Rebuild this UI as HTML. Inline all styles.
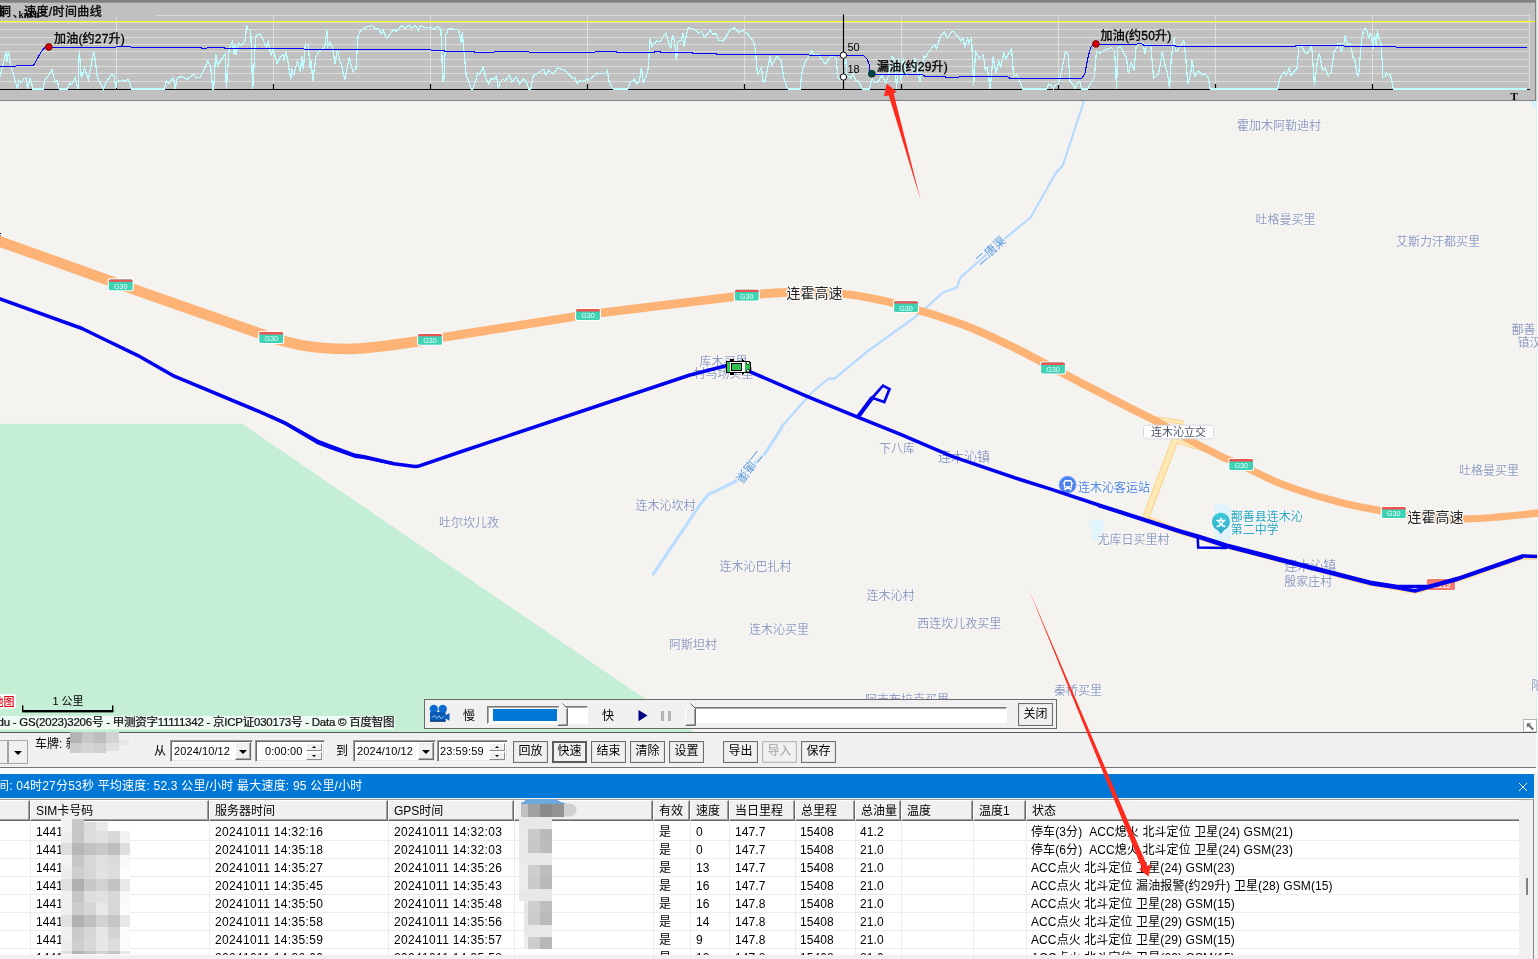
<!DOCTYPE html>
<html lang="zh"><head><meta charset="utf-8"><title>轨迹回放</title>
<style>
html,body{margin:0;padding:0}
body{width:1538px;height:959px;position:relative;overflow:hidden;background:#f0f0f0;font-family:"Liberation Sans","Noto Sans CJK SC",sans-serif;font-size:12px;color:#000}
svg{position:absolute;left:0;top:0;display:block}
#mapsvg,#pb,#tb,#bluebar,#tblwrap,.lab,.btn,.dp{will-change:transform}
#arrows{pointer-events:none}
.abs{position:absolute}
svg text{font-family:"Liberation Sans","Noto Sans CJK SC",sans-serif}
#mosaic{pointer-events:none}
/* playback bar */
#pb{position:absolute;left:424px;top:699px;width:633px;height:30px;background:#f0f0f0;border:1px solid #6a6a6a;box-sizing:border-box}
.sunk{position:absolute;box-sizing:border-box;background:#fff;border:1px solid;border-color:#7a7a7a #fff #fff #7a7a7a;box-shadow:inset 1px 1px 0 #a8a8a8}
.lab{position:absolute;white-space:nowrap;line-height:14px;height:14px}
.btn{position:absolute;box-sizing:border-box;height:22px;top:741px;background:#f0f0f0;border:1px solid #6e6e6e;text-align:center;line-height:19px;font-size:12px;white-space:nowrap;box-shadow:inset 0 0 0 1px #e4e4e4}
.btn.dis{color:#a0a0a0;border-color:#b8b8b8}
.btn.focus{border:2px solid #5c5c5c;line-height:17px;box-shadow:none}
.thumb{position:absolute}
/* toolbar */
#tb{position:absolute;left:0;top:733px;width:1536px;height:34px;background:#f0f0f0;box-shadow:2px 0 0 #fafafa}
#tbline{position:absolute;left:0;top:767px;width:1536px;height:1px;background:#747474}
#gap{position:absolute;left:0;top:768px;width:1538px;height:6px;background:#fafafa}
#bluebar{position:absolute;left:0;top:774px;width:1534px;height:24px;background:#0078d7;color:#fff;font-size:12px;line-height:24px;white-space:nowrap}
.dp{position:absolute;top:740px;height:22px;box-sizing:border-box;background:#fff;border:1px solid;border-color:#9a9a9a #f8f8f8 #f8f8f8 #9a9a9a;box-shadow:inset 1px 1px 0 #6a6a6a, inset -1px -1px 0 #e3e3e3;font-size:11px;line-height:19px;white-space:nowrap}
.dp span.t{position:absolute;left:3px;top:1px;letter-spacing:0.1px}
.ddb{position:absolute;right:1px;top:1px;width:16px;height:18px;box-sizing:border-box;background:#f0f0f0;border:1px solid;border-color:#fff #6e6e6e #6e6e6e #fff;box-shadow:inset -1px -1px 0 #a8a8a8}
.ddb:after{content:"";position:absolute;left:3px;top:7px;border:4px solid transparent;border-top:4px solid #000;border-bottom:0}
.spin{position:absolute;right:2px;top:2px;width:16px;height:17px}
.spin i{position:absolute;left:0;width:16px;height:8px;box-sizing:border-box;background:#f0f0f0;border:1px solid;border-color:#fff #8a8a8a #8a8a8a #fff}
.spin i:after{content:"";position:absolute;left:5px;top:2px;border:2px solid transparent}
.spin i.u{top:0}.spin i.u:after{border-bottom:2px solid #000;border-top:0}
.spin i.d{top:9px}.spin i.d:after{border-top:2px solid #000;border-bottom:0;top:2px}
/* table */
#tblwrap{position:absolute;left:0;top:799px;width:1534px;height:160px;background:#f0f0f0;border-top:1px solid #a0a0a0;border-right:1px solid #8a8a8a;box-sizing:border-box}
#tblbody{position:absolute;left:0;top:0;width:1519px;height:155px;background:#fff;border-radius:0 0 4px 0;overflow:hidden}
.hc{position:absolute;top:0;height:21px;box-sizing:border-box;background:#f0f0f0;border-left:1px solid #fff;border-top:1px solid #fff;border-right:1px solid #696969;border-bottom:1px solid #696969;box-shadow:inset -1px -1px 0 #a0a0a0;font-size:12px;line-height:20px;padding-left:5px;white-space:nowrap;overflow:hidden}
.row{position:absolute;left:0;width:1519px;height:18px;border-bottom:1px solid #ececec;box-sizing:border-box;font-size:12px;line-height:18px;white-space:nowrap}
.row span{position:absolute;top:0;letter-spacing:0.1px}
.row span.d{letter-spacing:0.33px}
.vl{position:absolute;top:21px;width:1px;height:140px;background:#ececec}
.mos{position:absolute}

.hc.last{border-right:0;box-shadow:inset 0 -1px 0 #a0a0a0}
.cl{position:absolute;white-space:nowrap;font-family:"Liberation Sans","Noto Sans CJK SC",sans-serif;font-size:12px;line-height:13px;color:#000}
.cl{-webkit-text-stroke:0.35px #000}
.cl.ser{font-family:"Liberation Serif","Noto Serif CJK SC",serif;-webkit-text-stroke:0}
.cl.num{-webkit-text-stroke:0}

</style></head><body>
<svg id="mapsvg" width="1538" height="959" viewBox="0 0 1538 959">
<g id="map">
<rect x="0" y="101" width="1536" height="631" fill="#f5f3f0"/>
<rect x="1536" y="101" width="2" height="631" fill="#fafafa"/><rect x="1536" y="101" width="0.7" height="631" fill="#e4e4e4"/>
<polygon points="0,423.7 242,423.7 702.3,738 0,738" fill="#c4eed5"/>
<polygon points="1529,101 1536,101 1536,109" fill="#d8f3fb"/>
<polygon points="1214.2,504.2 1228,504.6 1228,506.2 1231,506.6 1231,541 1215,541 1215,531 1212.8,531 1212.8,515 1214.2,515" fill="#e2f4fb"/>
<path d="M1089 519.5H1103.5V540.5H1092V527H1089Z" fill="#e2f4fb"/>
<!-- canal -->
<polyline points="1084,101 1063,165 1055.5,173.5 1030.5,217.5 1003,240 960.5,277.5 957,287.5 943,292.5 918,315 868.7,350.4 834.5,378.7 828.4,378.5 810.2,394 782.9,425.2 777,435" fill="none" stroke="#b5daff" stroke-width="2.2" stroke-linejoin="round"/>
<polyline points="782.9,425.2 777,435 765,453.4 736.4,481 708.7,494.3 700.8,503.5 652.6,575.2" fill="none" stroke="#b9dcff" stroke-width="3.1" stroke-linejoin="round"/>
<!-- G312 under-road -->
<polyline points="1146,517.5 1180,531.8 1200,537.6 1226,546 1278.8,559.8 1370,583.4 1397.3,588.2 1414.9,591.6 1428.5,587.6 1458,579.4 1522.5,557 1537,557.2" fill="none" stroke="#ffdca6" stroke-width="5.4" stroke-linejoin="round"/>
<!-- yellow ramp roads -->
<g fill="none" stroke="#f9d58e" stroke-linecap="round" stroke-linejoin="round">
<path d="M1174.6 441 L1146 517" stroke-width="7.2"/>
<path d="M1157 419 Q1172 420.5 1181.6 422.5 Q1181 432 1175 440.5 Q1187 444.5 1205 450" stroke-width="4.4"/>
</g>
<g fill="none" stroke="#ffe9b6" stroke-linecap="round" stroke-linejoin="round">
<path d="M1174.6 441 L1146 517" stroke-width="5"/>
<path d="M1157 419 Q1172 420.5 1181.6 422.5 Q1181 432 1175 440.5 Q1187 444.5 1205 450" stroke-width="2.4"/>
</g>
<text x="-54" y="242.6" font-size="14px" fill="#1e1e1e" stroke="#fbfaf8" stroke-width="2.4" paint-order="stroke" stroke-linejoin="round">连霍高速</text>
<!-- highway -->
<g fill="none" stroke="#fdb376" stroke-linejoin="round" stroke-linecap="round">
<path d="M-5 239.8 L120.7 284.7 L271 337.4 C300 346.5 320 349 346 349 C372 349 400 344 430 339.4" stroke-width="10.6"/>
<path d="M425 340.2 L430 339.4 L587.7 314.5 L746.8 295.2 C775 292.5 800 291.5 820 292" stroke-width="8.8"/>
<path d="M815 291.9 L820 292 C850 293 880 299 906 306.6 C930 313 945 318 962.5 324.5 C985 333 1020 350 1053 368 L1080 382.3 L1130 408 L1158 422" stroke-width="8"/>
<path d="M1154 420 L1158 422 L1195.7 443.4 L1223.8 457.7 L1241.2 465 C1260 474.5 1270 479.5 1278 482.6 C1296 490 1315 495.5 1328.7 499.3 C1350 505.5 1368 509 1393.8 512.6 C1420 516.6 1440 518.8 1464 518.8 C1480 518.8 1490 518 1497.8 517 C1515 515.5 1525 514.5 1540 512.8" stroke-width="7.3"/>
</g>
<!-- G30 signs -->
<defs>
<g id="g30">
<rect x="-13" y="-6.5" width="26" height="13" rx="1.8" fill="#fff"/>
<rect x="-11.9" y="-5.3" width="23.8" height="10.8" rx="1.5" fill="#3fd1b4"/>
<path d="M-11.9 -3.8 a1.5 1.5 0 0 1 1.5 -1.5 h20.8 a1.5 1.5 0 0 1 1.5 1.5 v0.8 h-23.8z" fill="#ee5350"/>
<text x="0" y="4" font-size="8px" fill="#f2fffb" text-anchor="middle" textLength="13.6" lengthAdjust="spacingAndGlyphs">G30</text>
</g>
</defs>
<use href="#g30" x="120.7" y="284.7"/>
<use href="#g30" x="271.2" y="337.4"/>
<use href="#g30" x="430" y="339.2"/>
<use href="#g30" x="588" y="314.4"/>
<use href="#g30" x="746.8" y="295.1"/>
<use href="#g30" x="906" y="306.6"/>
<use href="#g30" x="1053" y="367.9"/>
<use href="#g30" x="1241.2" y="464.4"/>
<use href="#g30" x="1393.8" y="512.4"/>
<!-- G312 sign -->
<g>
<rect x="1426" y="578" width="30" height="13" rx="1.8" fill="#fff"/><rect x="1427" y="579" width="28" height="11" rx="1.2" fill="#fa7668"/>
<text x="1441" y="587.6" font-size="8px" font-weight="bold" fill="#fff" text-anchor="middle">G312</text>
</g>
<!-- place labels -->
<g font-size="12px" fill="#8f9dc2" stroke="#f8f7f5" stroke-width="2" paint-order="stroke" stroke-linejoin="round">
<text x="1237" y="130.4">霍加木阿勒迪村</text>
<text x="1255.5" y="223.8">吐格曼买里</text>
<text x="1396" y="246.0">艾斯力汗都买里</text>
<text x="1511.5" y="333.6">鄯善</text>
<text x="1517.5" y="346.8">镇汉</text>
<text x="1459" y="475.4">吐格曼买里</text>
<text x="699.5" y="365.6">库木买里</text>
<text x="693.5" y="378.4">村马场买里</text>
<text x="439" y="527.2">吐尔坎儿孜</text>
<text x="635.5" y="510.3">连木沁坎村</text>
<text x="719.5" y="570.5">连木沁巴扎村</text>
<text x="866.4" y="600.3">连木沁村</text>
<text x="917.3" y="627.6">西连坎儿孜买里</text>
<text x="749" y="634.2">连木沁买里</text>
<text x="669" y="649.3">阿斯坦村</text>
<text x="865" y="704.2">阿吉布拉克买里</text>
<text x="1054" y="695.0">秦桥买里</text>
<text x="879" y="453.0">下八库</text>
<text x="938" y="461.4" font-size="13px">连木沁镇</text>
<text x="1284.3" y="569.6" font-size="13px">连木沁镇</text>
<text x="1284.3" y="585.8">殷家庄村</text>
<text x="1097.5" y="543.8">尤库日买里村</text>
<text x="1531" y="690.3">阳</text>
</g>
<g font-size="12px" fill="#5a9be0" stroke="#f8f7f5" stroke-width="2" paint-order="stroke" stroke-linejoin="round">
<text transform="translate(990.5 250.5) rotate(-42)" text-anchor="middle" y="4.3">二唐渠</text>
<text transform="translate(749.5 467) rotate(127)" text-anchor="middle" y="4.3">二唐渠</text>
</g>
<g font-size="14px" fill="#1e1e1e" stroke="#fbfaf8" stroke-width="2.4" paint-order="stroke" stroke-linejoin="round">
<text x="786.5" y="298">连霍高速</text>
<text x="1407.5" y="522.4">连霍高速</text>
</g>
<!-- interchange label -->
<rect x="1143.5" y="425.2" width="70" height="13.6" rx="2.5" fill="#fff" stroke="#c9d2e6" stroke-width="0.8"/>
<text x="1178.4" y="435.9" font-size="11px" fill="#4a5068" text-anchor="middle">连木沁立交</text>
<!-- POIs -->
<g>
<circle cx="1067.6" cy="484.7" r="8.5" fill="#4f82ee"/>
<circle cx="1067.6" cy="484.7" r="8.5" fill="none" stroke="#7aa4f5" stroke-width="0.8"/>
<rect x="1063.8" y="480.1" width="8.3" height="8.8" rx="1.8" fill="#fff"/>
<rect x="1065" y="481.6" width="5.9" height="4.6" rx="0.7" fill="#4f82ee"/>
<circle cx="1065.6" cy="487.5" r="0.65" fill="#4f82ee"/><circle cx="1070.3" cy="487.5" r="0.65" fill="#4f82ee"/>
<rect x="1064.3" y="488.6" width="1.8" height="1.5" fill="#fff"/><rect x="1069.8" y="488.6" width="1.8" height="1.5" fill="#fff"/>
<rect x="1062.8" y="482.6" width="1" height="1.6" fill="#fff"/><rect x="1072.1" y="482.6" width="1" height="1.6" fill="#fff"/>
<text x="1078" y="491.5" font-size="12px" fill="#4c86e6" stroke="#f8f7f5" stroke-width="2" paint-order="stroke" stroke-linejoin="round">连木沁客运站</text>
</g>
<g>
<defs><linearGradient id="sg" x1="0" y1="0" x2="0" y2="1"><stop offset="0" stop-color="#3ecbd6"/><stop offset="1" stop-color="#2fa9cb"/></linearGradient></defs>
<path d="M1220.9 533.9 L1217.28 529.83 A8.9 8.9 0 1 1 1224.52 529.83 Z" fill="url(#sg)"/>
<text x="1220.9" y="525.6" font-size="9.5px" font-weight="bold" fill="#fff" text-anchor="middle" stroke="#fff" stroke-width="0.3">文</text>
<g font-size="12px" fill="#2ba7c4" stroke="#f8f7f5" stroke-width="2" paint-order="stroke" stroke-linejoin="round">
<text x="1230.8" y="521.4">鄯善县连木沁</text>
<text x="1230.8" y="534">第二中学</text>
</g>
</g>
<!-- track -->
<g fill="none" stroke="#0000ee" stroke-linejoin="round">
<polyline points="-3,297.8 82.1,328.5 100,337.2 137.5,355.3 174.2,376.2 260,411.9 284.7,422.8 317.2,441 330.2,446.2 355,455.3 364,456.8 394,463.7 414.7,466.6 418,466.3 460,452 690,375 726,365.8 738,364.5 749.1,371.3 807.6,396.6 857.7,417.2 900,434.1 952,456.3 960,459.2 1021.6,480 1050,488.9 1098.6,505 1120,511.7 1180,530.8 1200,536.7 1226,545 1278.8,558.6 1370,582.3 1397.3,586.6 1428.5,586.4 1458,578.3 1522.5,556 1537,556.4" stroke-width="3.5"/>
<polyline points="270,416.2 284.7,423.2 317.2,442.5 330.2,447.6 355,456.4 364,457.6 394,463.9" stroke-width="3"/>
<polyline points="1098.6,505.5 1120,512.4 1180,531.8 1200,537.7 1226,546.3 1278.8,560 1370,583.4 1397.3,587.8 1414.9,591 1428.5,587.2 1458,579.2 1522.5,556.8" stroke-width="3.5"/>
<path d="M857.7 417.2 L872.6 397.3" stroke-width="4.2"/>
<path d="M872.6 397.3 L883 385.6 L889.5 389.1 L884.3 402.1 L873.5 398.2" stroke-width="2.7" stroke-linejoin="miter"/>
<path d="M1197.7 537 L1198.2 547.4 L1227 547.9" stroke-width="2.5" stroke-linejoin="miter"/>
</g>
<!-- vehicle -->
<g shape-rendering="crispEdges">
<rect x="729.8" y="358.8" width="4.6" height="3" fill="#000"/><rect x="729.8" y="371.8" width="4.6" height="3" fill="#000"/>
<path d="M741.8 358.2 L743.8 360 L743.8 362 L741.8 362Z M741.8 375.2 L743.8 373.4 L743.8 371.8 L741.8 371.8Z" fill="#000"/>
<rect x="726.3" y="361" width="23.8" height="11.6" rx="1.6" fill="#30c050" stroke="#000" stroke-width="1"/>
<rect x="729.8" y="361.8" width="15" height="10" fill="#fff"/>
<rect x="731" y="363.2" width="10.8" height="7.4" fill="#30c050" stroke="#000" stroke-width="1"/>
<path d="M746 361.8 h3.4 v2.6 h-2 z M746 371.8 h3.4 v-2.6 h-2 z" fill="#fff" stroke="#000" stroke-width="0.6"/>
</g>
<!-- logo, scale, copyright -->
<g>
<rect x="-6" y="694.2" width="22" height="14.4" rx="2.2" fill="#fff"/>
<text x="-7.4" y="705.6" font-size="11px" font-weight="500" fill="#e60012">地图</text>
<text x="68" y="705" font-size="11px" fill="#000" text-anchor="middle">1 公里</text>
<rect x="22" y="705.4" width="1.4" height="6" fill="#000"/><rect x="112" y="705.4" width="1.4" height="6" fill="#000"/>
<rect x="22" y="710" width="91.4" height="2.4" fill="#000"/>
<rect x="0" y="716" width="395" height="13.5" fill="#ffffff" fill-opacity="0.72"/>
<text x="-2.5" y="726.4" font-size="11.5px" fill="#111" stroke="#111" stroke-width="0.22" textLength="397" lengthAdjust="spacing">du - GS(2023)3206号 - 甲测资字11111342 - 京ICP证030173号 - Data © 百度智图</text>
</g>
<!-- corner button -->
<rect x="1523.5" y="719.5" width="13" height="12.5" fill="#fff" stroke="#b4b4b4" stroke-width="1"/>
<path d="M1526.8 723.2 H1531.4 L1529.8 724.8 L1534 729 L1532.6 730.4 L1528.4 726.2 L1526.8 727.8Z" fill="#707070"/>
<rect x="0" y="732" width="1536.5" height="1.2" fill="#5a5a5a"/>
</g>

<g id="chart">
<rect x="0" y="0" width="1538" height="101" fill="#c0c0c0"/>
<rect x="0" y="0" width="1536" height="2.7" fill="#808080"/>
<rect x="0" y="100" width="1536" height="1" fill="#808080"/>
<rect x="1535" y="0" width="1.3" height="101" fill="#808080"/>
<rect x="1536.3" y="0" width="1.7" height="101" fill="#e8e8e8"/>
<g stroke="#dcdcdc" stroke-width="1" fill="none">
<path d="M157 15.5H1529.5M0 22.5H1529.5M0 29.5H1529.5M0 37.5H1529.5M0 44.5H1529.5M0 51.5H1529.5M0 59.5H1529.5M0 66.5H1529.5M0 73.5H1529.5M0 81.5H1529.5"/>
<path d="M116.5 17V89M273.5 15V89M430.5 15V89M587.5 15V89M744.5 15V89M901.5 15V89M1058.5 15V89M1215.5 15V89M1372.5 15V89M1529.5 15V89"/>
</g>
<path d="M0 89.5H1530" stroke="#000" stroke-width="1" shape-rendering="crispEdges"/>
<path d="M116.5 84V89M273.5 84V89M430.5 84V89M587.5 84V89M744.5 84V89M901.5 84V89M1058.5 84V89M1215.5 84V89M1372.5 84V89" stroke="#000" stroke-width="1.2"/>
<path d="M0 21.5H1535" stroke="#ffff00" stroke-width="1" shape-rendering="crispEdges"/>
<polyline points="0.0,76.7 3.9,61.0 5.9,52.0 7.2,62.0 8.5,51.4 10.4,65.0 13.0,72.8 15.0,80.6 17.6,89.0 18.9,80.6 20.8,83.0 24.0,78.7 26.0,78.0 27.6,89.0 30.2,78.0 31.9,84.5 32.5,89.0 43.0,89.0 44.9,79.3 46.8,78.0 52.0,69.6 54.0,78.0 55.3,82.0 57.2,80.6 59.2,89.0 67.6,89.0 69.6,83.2 71.5,84.5 75.4,77.4 76.7,84.5 78.0,89.0 79.3,50.0 81.3,78.0 84.5,67.6 88.4,79.3 93.6,51.4 95.6,62.4 96.9,75.4 98.8,80.6 103.4,89.0 105.3,83.2 111.8,74.8 114.4,75.4 115.7,89.0 117.0,81.3 122.9,80.0 124.8,81.3 128.0,79.3 130.0,83.2 131.3,89.0 164.5,89.0 166.4,80.6 169.0,83.2 173.6,77.4 174.9,89.0 177.5,77.4 182.0,76.7 187.0,79.3 193.8,74.1 196.4,78.0 200.0,77.4 203.0,72.0 207.8,60.5 210.7,67.3 212.7,89.0 213.7,89.0 215.6,53.6 217.6,65.3 225.4,53.6 226.3,89.0 229.3,47.8 232.2,41.9 234.1,53.6 235.1,43.9 236.1,54.6 239.0,42.9 241.0,45.8 244.9,41.0 246.8,25.4 247.8,29.3 250.7,30.2 252.7,89.0 255.6,37.0 259.5,33.5 262.4,38.0 266.3,47.8 268.3,41.9 271.2,55.6 273.1,48.8 277.0,63.4 280.0,57.5 282.9,54.6 283.9,60.5 285.8,51.7 287.8,60.5 290.7,80.0 291.7,68.3 293.6,76.0 297.5,60.5 300.4,72.2 301.8,55.6 303.4,70.2 305.3,43.9 308.2,44.9 310.2,68.3 311.2,60.5 312.7,81.0 316.0,56.6 319.0,51.7 324.8,46.8 326.8,30.2 327.8,45.8 329.7,41.9 331.7,46.8 332.6,46.8 335.0,64.4 337.5,48.8 339.5,60.5 341.4,64.4 344.7,80.0 349.2,57.5 353.1,72.2 356.0,68.3 358.0,37.0 360.0,31.2 365.8,27.3 372.6,25.4 375.5,29.3 378.5,28.3 381.4,34.1 383.3,30.2 386.3,38.0 390.2,34.1 394.0,29.3 396.0,31.2 401.9,25.4 404.8,28.3 408.7,25.4 411.6,28.3 415.5,25.4 418.4,30.2 420.4,25.4 424.3,27.3 430.1,27.3 434.0,29.3 437.9,26.0 440.9,29.3 442.8,80.0 443.8,81.0 445.8,35.1 448.7,28.3 453.6,29.3 458.4,29.3 461.4,42.9 462.3,32.2 466.2,76.0 468.2,80.0 471.1,89.0 473.0,89.0 477.9,73.1 479.9,74.1 483.2,67.3 485.7,78.0 488.7,83.9 490.6,79.0 494.5,79.0 496.5,76.0 498.4,89.0 500.0,81.9 502.9,79.0 504.9,81.0 509.4,75.1 511.7,81.9 516.6,77.0 519.5,83.9 523.4,79.0 526.3,81.9 528.9,89.0 530.8,89.0 533.2,76.0 543.9,69.2 545.8,75.1 548.8,70.2 553.6,74.1 557.5,67.9 566.3,71.2 573.1,79.0 575.1,78.0 577.0,83.9 580.0,80.0 582.9,81.5 586.8,79.0 588.7,80.0 597.5,73.1 604.3,73.7 607.3,70.6 609.2,81.9 613.1,89.0 627.8,89.0 629.7,82.9 634.6,79.0 636.5,83.9 639.5,81.0 641.4,67.3 643.4,82.9 646.3,76.0 648.2,68.3 650.2,38.0 651.7,46.8 656.0,41.0 659.9,41.9 665.8,32.8 670.7,48.8 672.6,35.1 674.6,41.9 676.5,61.4 677.9,41.9 681.4,40.0 683.0,33.2 683.7,46.8 688.2,27.7 695.0,29.3 698.9,33.2 700.9,31.2 704.8,37.4 710.3,30.2 712.6,34.1 716.5,34.1 718.5,40.0 723.3,41.0 729.2,31.2 734.0,27.7 738.9,32.2 742.8,30.2 748.7,35.1 753.6,41.9 755.5,50.7 757.5,75.1 761.4,67.3 763.3,81.9 765.3,80.0 770.1,56.6 771.7,65.3 777.0,56.2 780.9,60.5 783.8,78.0 786.7,86.8 788.7,89.0 800.0,89.0 802.0,72.2 804.9,62.4 811.7,51.1 814.6,55.6 818.5,54.6 825.4,64.4 830.2,56.6 834.1,55.6 836.1,58.5 838.0,78.0 841.0,80.0 845.8,58.5 846.8,75.1 850.7,78.0 852.7,74.1 855.6,80.0 858.5,81.9 862.4,89.0 869.2,89.0 872.2,79.0 875.1,82.9 878.0,81.9 881.9,75.1 885.8,82.9 888.7,75.1 891.7,56.6 894.6,58.5 896.5,89.0 898.5,58.5 901.4,81.9 903.4,58.5 906.3,75.1 912.2,74.1 915.1,58.5 920.0,81.9 923.9,56.6 924.8,58.5 928.7,51.7 934.6,44.9 936.5,48.8 940.4,36.1 944.3,32.2 947.3,38.0 951.2,32.2 954.1,31.2 956.0,35.1 959.0,37.0 960.9,41.0 962.9,38.0 964.8,46.8 967.7,38.0 968.7,42.9 971.6,38.0 973.6,85.8 975.5,51.7 979.4,58.5 983.3,54.6 985.3,70.2 987.2,67.3 990.2,89.0 993.1,56.6 996.0,73.1 998.9,61.4 1000.9,67.3 1003.8,52.7 1005.8,58.5 1011.6,48.8 1013.6,76.0 1016.5,75.1 1019.4,79.0 1022.4,89.0 1046.7,89.0 1048.7,83.9 1051.6,85.8 1053.6,89.0 1055.5,84.8 1058.4,83.9 1061.4,72.2 1065.3,51.7 1068.2,54.6 1070.1,81.9 1073.1,84.8 1075.0,89.0 1077.0,83.9 1079.9,81.9 1081.8,89.0 1087.7,89.0 1091.6,81.9 1094.5,76.0 1096.5,50.7 1100.0,53.6 1104.9,49.7 1111.7,47.8 1114.6,50.7 1116.6,89.0 1117.6,47.8 1120.5,46.8 1124.4,54.6 1126.3,56.6 1128.3,73.1 1131.2,62.4 1134.1,70.2 1136.1,46.8 1139.0,43.9 1142.9,42.9 1144.9,53.6 1146.8,44.9 1150.7,44.9 1153.6,78.0 1158.5,74.1 1162.4,51.7 1165.3,66.3 1167.3,72.2 1169.6,89.0 1171.2,58.5 1174.1,38.0 1176.1,51.7 1180.0,46.8 1183.9,41.0 1185.8,58.5 1187.8,83.9 1190.7,74.1 1192.1,60.5 1194.6,76.0 1198.5,71.2 1202.4,75.1 1205.3,74.1 1208.3,78.0 1210.2,89.0 1277.5,89.0 1280.4,77.0 1284.3,72.2 1286.3,75.1 1289.2,68.3 1291.1,76.0 1295.0,70.2 1297.0,68.3 1298.9,46.8 1301.9,45.8 1304.8,52.7 1307.7,53.6 1311.6,44.9 1314.5,84.8 1317.5,60.5 1319.4,52.7 1322.4,70.2 1325.3,68.3 1328.2,76.0 1331.1,72.2 1334.0,51.7 1337.0,47.8 1338.0,43.6 1340.0,43.6 1341.3,51.4 1343.9,42.9 1345.4,35.1 1346.5,44.2 1350.4,43.6 1351.7,50.1 1353.0,57.2 1354.9,59.8 1356.9,74.8 1358.5,76.1 1359.5,65.0 1361.4,40.3 1363.4,31.2 1365.3,27.6 1367.3,31.9 1368.6,38.4 1369.9,33.8 1371.2,34.5 1373.1,49.4 1374.4,34.5 1376.4,46.8 1377.4,30.2 1379.0,39.0 1380.9,42.9 1382.2,61.1 1382.9,77.4 1384.8,76.7 1386.1,72.8 1388.1,75.4 1390.0,74.8 1391.3,78.0 1393.3,89.0 1527.0,89.0" fill="none" stroke="#c0ffff" stroke-width="1.25" shape-rendering="crispEdges"/>
<polyline points="0.0,66.6 15.6,66.6 16.3,65.4 33.2,65.4 34.5,63.7 41.0,52.0 44.9,47.5 115.7,47.5 117.0,46.2 130.7,46.2 131.3,47.5 200.0,47.5 202.0,48.2 206.8,48.2 207.8,47.2 223.4,47.2 225.0,48.2 302.4,48.2 304.3,49.1 317.0,49.1 318.0,49.7 430.1,49.7 432.1,50.5 443.8,50.5 444.8,51.3 473.0,51.3 475.0,52.3 493.5,52.3 494.5,51.5 528.3,51.5 529.3,52.3 594.6,52.3 595.6,51.5 616.0,51.5 617.0,52.3 654.1,52.3 655.1,51.5 659.9,51.5 660.9,52.3 691.1,52.3 692.7,53.2 715.5,53.2 716.5,54.2 800.0,54.6 808.8,54.6 809.8,55.6 863.4,55.6 867.3,59.5 869.2,64.4 870.2,73.1 871.2,74.1 922.9,74.7 924.8,76.5 944.3,76.5 946.3,77.4 958.0,77.4 960.0,76.5 1007.7,76.5 1009.7,78.4 1081.8,78.4 1084.8,74.1 1087.7,58.5 1090.6,47.8 1092.6,44.9 1095.9,43.9 1100.0,44.5 1136.0,44.5 1137.0,43.9 1142.0,43.9 1143.9,45.2 1174.0,45.2 1176.0,46.4 1295.0,46.4 1296.0,45.2 1340.9,45.2 1345.8,46.4 1395.9,46.4 1396.1,47.5 1526.8,47.5" fill="none" stroke="#0000ff" stroke-width="1.1" shape-rendering="crispEdges"/>
<path d="M843.5 14.5V89" stroke="#000" stroke-width="1.2"/>
<circle cx="843.4" cy="55.2" r="3.2" fill="#fff" stroke="#000" stroke-width="1"/>
<circle cx="843.4" cy="77" r="3.2" fill="#fff" stroke="#000" stroke-width="1"/>
<circle cx="48.8" cy="47" r="3.4" fill="#d00000" stroke="#700000" stroke-width="0.8"/>
<circle cx="1095.9" cy="43.9" r="3.4" fill="#d00000" stroke="#700000" stroke-width="0.8"/>
<circle cx="871.8" cy="73.7" r="3.4" fill="#004848" stroke="#002020" stroke-width="0.8"/>

</g>

</svg>
<div id="chartlabels">
<span class="cl" style="left:-1px;top:6px">洞</span><span class="cl" style="left:-7px;top:6px">油</span>
<span class="cl" style="left:13px;top:7px;font-size:10px">、</span><span class="cl ser" style="left:18.5px;top:9px;font-size:9.5px;font-weight:bold">km/h</span>
<span class="cl" style="left:24px;top:6px;letter-spacing:0.4px">速度/时间曲线</span>
<span class="cl" style="left:54px;top:33.3px;letter-spacing:0.2px">加油(约27升)</span>
<span class="cl" style="left:877px;top:60.6px;letter-spacing:0.2px">漏油(约29升)</span>
<span class="cl" style="left:1100.5px;top:30.3px;letter-spacing:0.2px">加油(约50升)</span>
<span class="cl num" style="left:847.5px;top:41px;font-size:11px">50</span>
<span class="cl num" style="left:847.5px;top:63px;font-size:11px">18</span>
<span class="cl ser" style="left:1510.5px;top:89.5px;font-size:11px;font-weight:bold">T</span>
</div>
<div id="pb">
<svg width="23" height="19" viewBox="0 0 24 20" style="left:3px;top:4px">
<circle cx="6" cy="5.2" r="4.4" fill="#0a6ad0"/><circle cx="15.4" cy="5.2" r="4.4" fill="#0a6ad0"/>
<rect x="2" y="8.5" width="16.5" height="9.5" rx="1" fill="#0a5cb8"/>
<path d="M18 12 L22.5 9.5 V17.5 L18 15Z" fill="#0a5cb8"/>
<path d="M4 14.5 L6.5 12 L9 15 L11.5 12.5 L14 15.5 L16.5 13" fill="none" stroke="#bfe0ff" stroke-width="0.9"/>
<rect x="2" y="17.2" width="16.5" height="1.6" fill="#063f86"/>
</svg>
<span class="lab" style="left:37.5px;top:9px">慢</span>
<div class="sunk" style="left:62px;top:6px;width:101px;height:18px"></div>
<div class="abs" style="left:68px;top:9px;width:65px;height:12px;background:#0078d7"></div>
<svg class="thumb" width="12" height="24" viewBox="0 0 12 24" style="left:132px;top:3px"><path d="M0.5 5.5 L5.5 0.5 L10.5 5.5 V22.5 H0.5Z" fill="#f0f0f0"/><path d="M0.5 22.5 V5.5 L5.5 0.5" fill="none" stroke="#fff" stroke-width="1"/><path d="M5.5 0.5 L10.5 5.5 V22.5 H0.5" fill="none" stroke="#6a6a6a" stroke-width="1"/><path d="M9.5 6 V21.5 H1.5" fill="none" stroke="#a8a8a8" stroke-width="1"/></svg>
<span class="lab" style="left:176.5px;top:9px">快</span>
<svg width="10" height="12" viewBox="0 0 10 12" style="left:213px;top:10px"><path d="M0.5 0 L9.5 5.6 L0.5 11.2Z" fill="#000080"/></svg>
<div class="abs" style="left:236px;top:11px;width:3px;height:10px;background:#b4b4b4"></div><div class="abs" style="left:243px;top:11px;width:3px;height:10px;background:#b4b4b4"></div>
<div class="sunk" style="left:266px;top:7px;width:316px;height:16px"></div>
<svg class="thumb" width="12" height="24" viewBox="0 0 12 24" style="left:260px;top:3px"><path d="M0.5 5.5 L5.5 0.5 L10.5 5.5 V22.5 H0.5Z" fill="#f0f0f0"/><path d="M0.5 22.5 V5.5 L5.5 0.5" fill="none" stroke="#fff" stroke-width="1"/><path d="M5.5 0.5 L10.5 5.5 V22.5 H0.5" fill="none" stroke="#6a6a6a" stroke-width="1"/><path d="M9.5 6 V21.5 H1.5" fill="none" stroke="#a8a8a8" stroke-width="1"/></svg>
<div class="btn" style="left:593px;top:3px;width:35px;height:23px;line-height:20px">关闭</div>
</div>
<div id="tb"></div><div id="tbline"></div><div id="gap"></div>
<div class="abs" style="left:-10px;top:740px;width:37.5px;height:24px;box-sizing:border-box;border:1px solid #a8a8a8;background:#f0f0f0"><div class="abs" style="left:16px;top:0;width:1.5px;height:22px;background:#a4a4a4"></div><div class="abs" style="left:23px;top:10px;border:4px solid transparent;border-top:4px solid #000;border-bottom:0"></div></div>
<span class="lab" style="left:35px;top:737px">车牌: 新</span>
<span class="lab" style="left:154px;top:743.5px">从</span>
<div class="dp" style="left:170px;width:83px"><span class="t">2024/10/12</span><div class="ddb"></div></div>
<div class="dp" style="left:255px;width:70px"><span class="t" style="left:9px">0:00:00</span><div class="spin"><i class="u"></i><i class="d"></i></div></div>
<span class="lab" style="left:336px;top:743.5px">到</span>
<div class="dp" style="left:353px;width:83px"><span class="t">2024/10/12</span><div class="ddb"></div></div>
<div class="dp" style="left:437px;width:70.5px"><span class="t" style="left:2px">23:59:59</span><div class="spin"><i class="u"></i><i class="d"></i></div></div>
<div class="btn" style="left:513px;width:35px">回放</div>
<div class="btn focus" style="left:552px;width:35px">快速</div>
<div class="btn" style="left:591px;width:35px">结束</div>
<div class="btn" style="left:630px;width:35px">清除</div>
<div class="btn" style="left:669px;width:35px">设置</div>
<div class="btn" style="left:723px;width:35px">导出</div>
<div class="btn dis" style="left:762px;width:35px">导入</div>
<div class="btn" style="left:801px;width:35px">保存</div>
<div id="bluebar"><span class="abs" style="left:-3px;top:0;letter-spacing:0.2px">间: 04时27分53秒 平均速度: 52.3 公里/小时 最大速度: 95 公里/小时</span><svg width="10" height="10" viewBox="0 0 10 10" style="left:1517.5px;top:7.5px"><path d="M1 1L9 9M9 1L1 9" stroke="#fff" stroke-width="0.95"/></svg></div>
<div id="tblwrap"><div id="tblbody">
<div class="hc" style="left:-39px;width:69px"></div>
<div class="hc" style="left:30px;width:179px">SIM卡号码</div>
<div class="hc" style="left:209px;width:179px">服务器时间</div>
<div class="hc" style="left:388px;width:126px">GPS时间</div>
<div class="hc" style="left:514px;width:139px"></div>
<div class="hc" style="left:653px;width:37px">有效</div>
<div class="hc" style="left:690px;width:39px">速度</div>
<div class="hc" style="left:729px;width:66px">当日里程</div>
<div class="hc" style="left:795px;width:60px">总里程</div>
<div class="hc" style="left:855px;width:46px">总油量</div>
<div class="hc" style="left:901px;width:72px">温度</div>
<div class="hc" style="left:973px;width:53px">温度1</div>
<div class="hc last" style="left:1026px;width:493px">状态</div>
<div class="vl" style="left:30px"></div>
<div class="vl" style="left:209px"></div>
<div class="vl" style="left:388px"></div>
<div class="vl" style="left:514px"></div>
<div class="vl" style="left:653px"></div>
<div class="vl" style="left:690px"></div>
<div class="vl" style="left:729px"></div>
<div class="vl" style="left:795px"></div>
<div class="vl" style="left:855px"></div>
<div class="vl" style="left:901px"></div>
<div class="vl" style="left:973px"></div>
<div class="vl" style="left:1026px"></div>
<div class="row" style="top:23px"><span style="left:36px">144119</span><span class="d" style="left:215px">20241011 14:32:16</span><span class="d" style="left:394px">20241011 14:32:03</span><span style="left:659px">是</span><span style="left:696px">0</span><span style="left:735px">147.7</span><span style="left:800px">15408</span><span style="left:860px">41.2</span><span style="left:1031px">停车(3分)&nbsp; ACC熄火 北斗定位 卫星(24) GSM(21)</span></div>
<div class="row" style="top:41px"><span style="left:36px">1441</span><span class="d" style="left:215px">20241011 14:35:18</span><span class="d" style="left:394px">20241011 14:32:03</span><span style="left:659px">是</span><span style="left:696px">0</span><span style="left:735px">147.7</span><span style="left:800px">15408</span><span style="left:860px">21.0</span><span style="left:1031px">停车(6分)&nbsp; ACC熄火 北斗定位 卫星(24) GSM(23)</span></div>
<div class="row" style="top:59px"><span style="left:36px">1441</span><span class="d" style="left:215px">20241011 14:35:27</span><span class="d" style="left:394px">20241011 14:35:26</span><span style="left:659px">是</span><span style="left:696px">13</span><span style="left:735px">147.7</span><span style="left:800px">15408</span><span style="left:860px">21.0</span><span style="left:1031px">ACC点火 北斗定位 卫星(24) GSM(23)</span></div>
<div class="row" style="top:77px"><span style="left:36px">1441</span><span class="d" style="left:215px">20241011 14:35:45</span><span class="d" style="left:394px">20241011 14:35:43</span><span style="left:659px">是</span><span style="left:696px">16</span><span style="left:735px">147.7</span><span style="left:800px">15408</span><span style="left:860px">21.0</span><span style="left:1031px">ACC点火 北斗定位 漏油报警(约29升) 卫星(28) GSM(15)</span></div>
<div class="row" style="top:95px"><span style="left:36px">1441</span><span class="d" style="left:215px">20241011 14:35:50</span><span class="d" style="left:394px">20241011 14:35:48</span><span style="left:659px">是</span><span style="left:696px">16</span><span style="left:735px">147.8</span><span style="left:800px">15408</span><span style="left:860px">21.0</span><span style="left:1031px">ACC点火 北斗定位 卫星(28) GSM(15)</span></div>
<div class="row" style="top:113px"><span style="left:36px">1441</span><span class="d" style="left:215px">20241011 14:35:58</span><span class="d" style="left:394px">20241011 14:35:56</span><span style="left:659px">是</span><span style="left:696px">14</span><span style="left:735px">147.8</span><span style="left:800px">15408</span><span style="left:860px">21.0</span><span style="left:1031px">ACC点火 北斗定位 卫星(29) GSM(15)</span></div>
<div class="row" style="top:131px"><span style="left:36px">1441</span><span class="d" style="left:215px">20241011 14:35:59</span><span class="d" style="left:394px">20241011 14:35:57</span><span style="left:659px">是</span><span style="left:696px">9</span><span style="left:735px">147.8</span><span style="left:800px">15408</span><span style="left:860px">21.0</span><span style="left:1031px">ACC点火 北斗定位 卫星(29) GSM(15)</span></div>
<div class="row" style="top:149px"><span style="left:36px">1441</span><span class="d" style="left:215px">20241011 14:36:00</span><span class="d" style="left:394px">20241011 14:35:58</span><span style="left:659px">是</span><span style="left:696px">12</span><span style="left:735px">147.8</span><span style="left:800px">15408</span><span style="left:860px">21.0</span><span style="left:1031px">ACC点火 北斗定位 卫星(29) GSM(15)</span></div>
</div>
<div class="abs" style="left:1526px;top:78px;width:2px;height:17px;background:#808080"></div>
</div>
<svg id="mosaic" width="1538" height="959" viewBox="0 0 1538 959" shape-rendering="crispEdges">
<rect x="70" y="731.5" width="12" height="11.5" fill="#b4b4b4"/>
<rect x="70" y="743" width="12" height="10" fill="#cdcdcd"/>
<rect x="82" y="731.5" width="12" height="11.5" fill="#c6c6c6"/>
<rect x="82" y="743" width="12" height="10" fill="#d4d4d4"/>
<rect x="94" y="731.5" width="12" height="11.5" fill="#bebebe"/>
<rect x="94" y="743" width="12" height="10" fill="#d0d0d0"/>
<rect x="106" y="731.5" width="13" height="11.5" fill="#d2d2d2"/>
<rect x="106" y="743" width="13" height="8" fill="#e0e0e0"/>
<rect x="119" y="740" width="10" height="5" fill="#e6e6e6"/>
<rect x="60.5" y="819.0" width="11.5" height="12" fill="#f2f2f2"/>
<rect x="72" y="819.0" width="12" height="12" fill="#c7c7c7"/>
<rect x="84" y="822" width="12" height="9.0" fill="#dbdbdb"/>
<rect x="96" y="822" width="12" height="9.0" fill="#e9e9e9"/>
<rect x="60.5" y="831.0" width="11.5" height="12" fill="#ededed"/>
<rect x="72" y="831.0" width="12" height="12" fill="#c6c6c6"/>
<rect x="84" y="831.0" width="12" height="12" fill="#dddddd"/>
<rect x="96" y="831.0" width="12" height="12" fill="#e0e0e0"/>
<rect x="108" y="831.0" width="12" height="12" fill="#d8d8d8"/>
<rect x="120" y="831.0" width="9.5" height="12" fill="#f2f2f2"/>
<rect x="60.5" y="843.0" width="11.5" height="12" fill="#dedede"/>
<rect x="72" y="843.0" width="12" height="12" fill="#b7b7b7"/>
<rect x="84" y="843.0" width="12" height="12" fill="#c2c2c2"/>
<rect x="96" y="843.0" width="12" height="12" fill="#c9c9c9"/>
<rect x="108" y="843.0" width="12" height="12" fill="#bebebe"/>
<rect x="120" y="843.0" width="9.5" height="12" fill="#dedede"/>
<rect x="60.5" y="855.0" width="11.5" height="12" fill="#f3f3f3"/>
<rect x="72" y="855.0" width="12" height="12" fill="#c6c6c6"/>
<rect x="84" y="855.0" width="12" height="12" fill="#d8d8d8"/>
<rect x="96" y="855.0" width="12" height="12" fill="#e0e0e0"/>
<rect x="108" y="855.0" width="12" height="12" fill="#dbdbdb"/>
<rect x="120" y="855.0" width="9.5" height="12" fill="#f9f9f9"/>
<rect x="60.5" y="867.0" width="11.5" height="12" fill="#ededed"/>
<rect x="72" y="867.0" width="12" height="12" fill="#cecece"/>
<rect x="84" y="867.0" width="12" height="12" fill="#d6d6d6"/>
<rect x="96" y="867.0" width="12" height="12" fill="#e2e2e2"/>
<rect x="108" y="867.0" width="12" height="12" fill="#dddddd"/>
<rect x="120" y="867.0" width="9.5" height="12" fill="#fdfdfd"/>
<rect x="60.5" y="879.0" width="11.5" height="12" fill="#e0e0e0"/>
<rect x="72" y="879.0" width="12" height="12" fill="#afafaf"/>
<rect x="84" y="879.0" width="12" height="12" fill="#c8c8c8"/>
<rect x="96" y="879.0" width="12" height="12" fill="#d2d2d2"/>
<rect x="108" y="879.0" width="12" height="12" fill="#c3c3c3"/>
<rect x="120" y="879.0" width="9.5" height="12" fill="#e8e8e8"/>
<rect x="60.5" y="891.0" width="11.5" height="12" fill="#f0f0f0"/>
<rect x="72" y="891.0" width="12" height="12" fill="#c5c5c5"/>
<rect x="84" y="891.0" width="12" height="12" fill="#dddddd"/>
<rect x="96" y="891.0" width="12" height="12" fill="#e1e1e1"/>
<rect x="108" y="891.0" width="12" height="12" fill="#d7d7d7"/>
<rect x="120" y="891.0" width="9.5" height="12" fill="#f9f9f9"/>
<rect x="60.5" y="903.0" width="11.5" height="12" fill="#efefef"/>
<rect x="72" y="903.0" width="12" height="12" fill="#cdcdcd"/>
<rect x="84" y="903.0" width="12" height="12" fill="#d6d6d6"/>
<rect x="96" y="903.0" width="12" height="12" fill="#e8e8e8"/>
<rect x="108" y="903.0" width="12" height="12" fill="#d7d7d7"/>
<rect x="120" y="903.0" width="9.5" height="12" fill="#fbfbfb"/>
<rect x="60.5" y="915.0" width="11.5" height="12" fill="#e1e1e1"/>
<rect x="72" y="915.0" width="12" height="12" fill="#b1b1b1"/>
<rect x="84" y="915.0" width="12" height="12" fill="#c0c0c0"/>
<rect x="96" y="915.0" width="12" height="12" fill="#d2d2d2"/>
<rect x="108" y="915.0" width="12" height="12" fill="#c6c6c6"/>
<rect x="120" y="915.0" width="9.5" height="12" fill="#e8e8e8"/>
<rect x="60.5" y="927.0" width="11.5" height="12" fill="#f0f0f0"/>
<rect x="72" y="927.0" width="12" height="12" fill="#cacaca"/>
<rect x="84" y="927.0" width="12" height="12" fill="#d6d6d6"/>
<rect x="96" y="927.0" width="12" height="12" fill="#e7e7e7"/>
<rect x="108" y="927.0" width="12" height="12" fill="#d4d4d4"/>
<rect x="120" y="927.0" width="9.5" height="12" fill="#fcfcfc"/>
<rect x="60.5" y="939.0" width="11.5" height="12" fill="#ededed"/>
<rect x="72" y="939.0" width="12" height="12" fill="#cecece"/>
<rect x="84" y="939.0" width="12" height="12" fill="#d8d8d8"/>
<rect x="96" y="939.0" width="12" height="12" fill="#e6e6e6"/>
<rect x="108" y="939.0" width="12" height="12" fill="#dddddd"/>
<rect x="120" y="939.0" width="9.5" height="12" fill="#fbfbfb"/>
<rect x="60.5" y="951.0" width="11.5" height="3.0" fill="#dedede"/>
<rect x="72" y="951.0" width="12" height="3.0" fill="#b4b4b4"/>
<rect x="84" y="951.0" width="12" height="3.0" fill="#c6c6c6"/>
<rect x="96" y="951.0" width="12" height="3.0" fill="#d2d2d2"/>
<rect x="108" y="951.0" width="12" height="3.0" fill="#c4c4c4"/>
<rect x="120" y="951.0" width="9.5" height="3.0" fill="#e8e8e8"/>
<path d="M521 803.5 L528 798.5 H552 L566 803.5Z" fill="#6fa8de"/>
<rect x="520.5" y="803.5" width="7.5" height="13" fill="#c0c0c0"/>
<rect x="528" y="803.5" width="12" height="13" fill="#a0a0a0"/>
<rect x="540" y="803.5" width="12" height="13" fill="#8a8a8a"/>
<rect x="552" y="803.5" width="12" height="13" fill="#929292"/>
<path d="M564 803.5 h6 a6.5 6.5 0 0 1 0 13 h-6z" fill="#d0d0d0" shape-rendering="auto"/>
<rect x="519" y="816.5" width="9" height="12" fill="#e8e8e8"/>
<rect x="528" y="816.5" width="12" height="12" fill="#e8e8e8"/>
<rect x="540" y="816.5" width="12" height="12" fill="#e8e8e8"/>
<rect x="519" y="828.5" width="9" height="12" fill="#eaeaea"/>
<rect x="528" y="828.5" width="12" height="12" fill="#c9c9c9"/>
<rect x="540" y="828.5" width="12" height="12" fill="#bababa"/>
<rect x="519" y="840.5" width="9" height="12" fill="#e9e9e9"/>
<rect x="528" y="840.5" width="12" height="12" fill="#c7c7c7"/>
<rect x="540" y="840.5" width="12" height="12" fill="#bcbcbc"/>
<rect x="519" y="852.5" width="9" height="12" fill="#e8e8e8"/>
<rect x="528" y="852.5" width="12" height="12" fill="#e8e8e8"/>
<rect x="540" y="852.5" width="12" height="12" fill="#e8e8e8"/>
<rect x="519" y="864.5" width="9" height="12" fill="#eeeeee"/>
<rect x="528" y="864.5" width="12" height="12" fill="#cdcdcd"/>
<rect x="540" y="864.5" width="12" height="12" fill="#bdbdbd"/>
<rect x="519" y="876.5" width="9" height="12" fill="#ededed"/>
<rect x="528" y="876.5" width="12" height="12" fill="#cacaca"/>
<rect x="540" y="876.5" width="12" height="12" fill="#b9b9b9"/>
<rect x="519" y="888.5" width="9" height="12" fill="#e8e8e8"/>
<rect x="528" y="888.5" width="12" height="12" fill="#e8e8e8"/>
<rect x="540" y="888.5" width="12" height="12" fill="#e8e8e8"/>
<rect x="524" y="900.5" width="4" height="12" fill="#e7e7e7"/>
<rect x="528" y="900.5" width="12" height="12" fill="#cecece"/>
<rect x="540" y="900.5" width="12" height="12" fill="#bebebe"/>
<rect x="524" y="912.5" width="4" height="12" fill="#e8e8e8"/>
<rect x="528" y="912.5" width="12" height="12" fill="#cbcbcb"/>
<rect x="540" y="912.5" width="12" height="12" fill="#bababa"/>
<rect x="524" y="924.5" width="4" height="12" fill="#e8e8e8"/>
<rect x="528" y="924.5" width="12" height="12" fill="#e8e8e8"/>
<rect x="540" y="924.5" width="12" height="12" fill="#e8e8e8"/>
<rect x="524" y="936.5" width="4" height="12" fill="#ededed"/>
<rect x="528" y="936.5" width="12" height="12" fill="#cccccc"/>
<rect x="540" y="936.5" width="12" height="12" fill="#b8b8b8"/>
</svg>
<svg id="arrows" width="1538" height="959" viewBox="0 0 1538 959">
<polygon points="886.7,83.4 896.5,92 893.6,93.4 920.6,200 888.8,95.6 884,96.2" fill="#ff2a1c"/>
<polygon points="1028.3,588.3 1147.3,866 1151.1,864.1 1148.5,876.6 1138.6,868.8 1142,868.4" fill="#ff2a1c"/>

</svg>
</body></html>
